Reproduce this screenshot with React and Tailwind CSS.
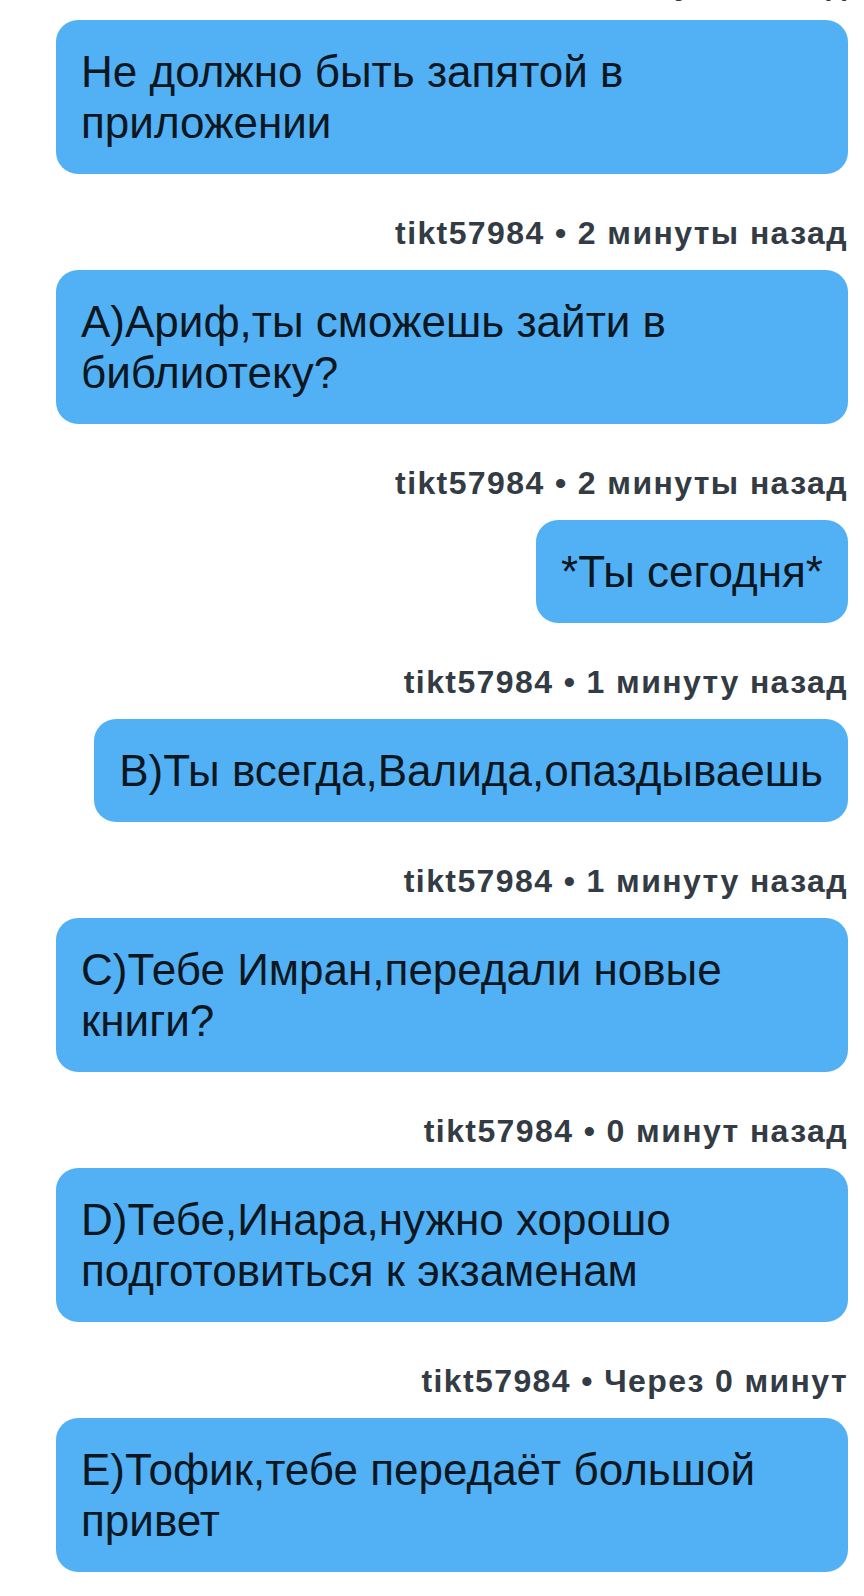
import React from "react";

const items = [
  { label: "tikt57984 • 2 минуты назад", text: "Не должно быть запятой в приложении" },
  { label: "tikt57984 • 2 минуты назад", text: "А)Ариф,ты сможешь зайти в библиотеку?" },
  { label: "tikt57984 • 2 минуты назад", text: "*Ты сегодня*" },
  { label: "tikt57984 • 1 минуту назад", text: "В)Ты всегда,Валида,опаздываешь" },
  { label: "tikt57984 • 1 минуту назад", text: "С)Тебе Имран,передали новые книги?" },
  { label: "tikt57984 • 0 минут назад", text: "D)Тебе,Инара,нужно хорошо подготовиться к экзаменам" },
  { label: "tikt57984 • Через 0 минут", text: "Е)Тофик,тебе передаёт большой привет" },
];

export default function App() {
  return (
    <div className="w-[864px] h-[1596px] overflow-hidden bg-white">
      <div className="flex flex-col items-end pl-[56px] pr-[16px] -mt-[35px]">
        {items.map((it, i) => (
          <React.Fragment key={i}>
            <div
              className={`${i === 0 ? "mt-0" : "mt-[41px]"} mb-[19px] h-[36px] leading-[36px] text-[32px] font-bold tracking-[1.4px] text-[#333b44] whitespace-nowrap`}
              style={{ fontFamily: '"Liberation Sans", Arial, sans-serif' }}
            >
              {it.label}
            </div>
            <div
              className="w-fit max-w-full rounded-[22px] bg-[#52b1f4] px-[25px] py-[26px] text-[44px] leading-[51px] text-[#0c1722]"
              style={{ fontFamily: '"Liberation Sans", Arial, sans-serif' }}
            >
              {it.text}
            </div>
          </React.Fragment>
        ))}
      </div>
    </div>
  );
}
